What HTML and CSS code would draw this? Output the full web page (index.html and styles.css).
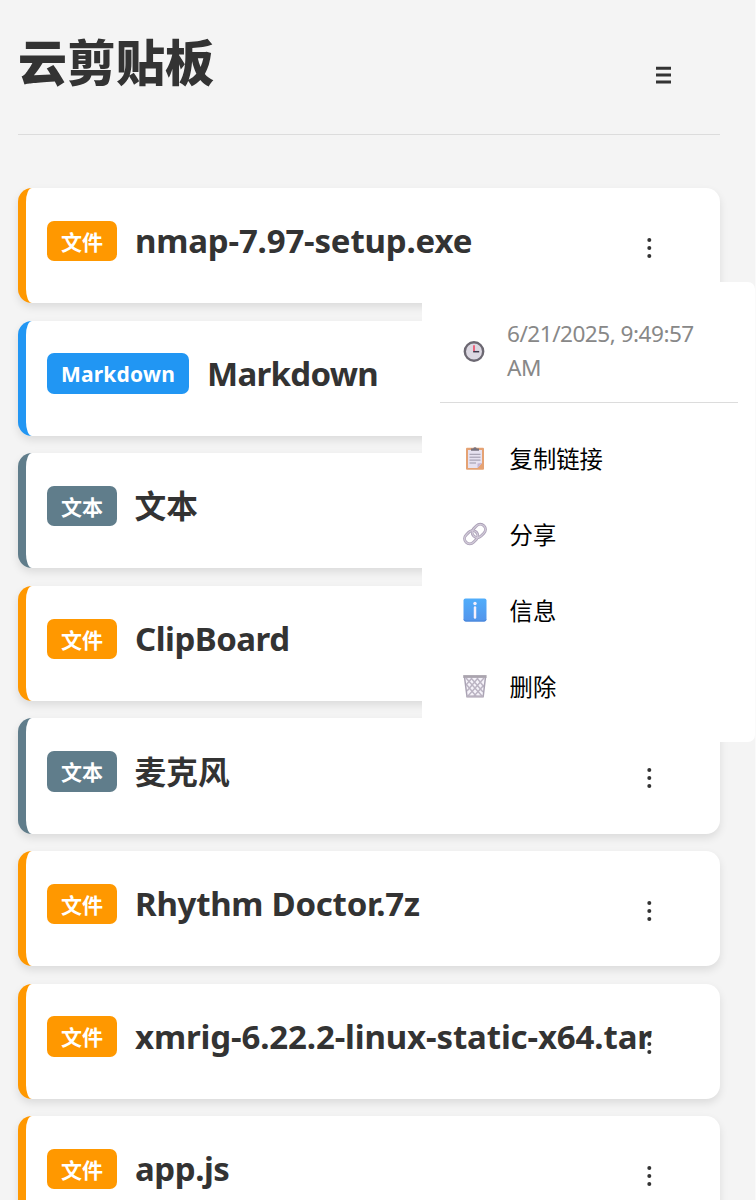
FILE: index.html
```html
<!DOCTYPE html>
<html lang="zh-CN">
<head>
<meta charset="utf-8">
<title>云剪贴板</title>
<link rel="stylesheet" href="styles.css">
</head>
<body>
<div class="page">
<header class="header">
  <h1 class="brand">云剪贴板</h1>
  <svg class="burger" width="16" height="20" viewBox="0 0 16 20"><path d="M0 3.200h15M0 10h15M0 17h15" stroke="#333" stroke-width="3"/></svg>
</header>
<main class="list">
  <article class="card file"><span class="badge">文件</span><h2 class="title t-nmap">nmap-7.97-setup.exe</h2><svg class="more" viewBox="0 0 48 24"><circle cx="24.3" cy="4" r="2"/><circle cx="24.3" cy="12" r="2"/><circle cx="24.3" cy="20" r="2"/></svg></article>
  <article class="card markdown"><span class="badge">Markdown</span><h2 class="title t-md">Markdown</h2><svg class="more" viewBox="0 0 48 24"><circle cx="24.3" cy="4" r="2"/><circle cx="24.3" cy="12" r="2"/><circle cx="24.3" cy="20" r="2"/></svg></article>
  <article class="card text"><span class="badge">文本</span><h2 class="title cjk">文本</h2><svg class="more" viewBox="0 0 48 24"><circle cx="24.3" cy="4" r="2"/><circle cx="24.3" cy="12" r="2"/><circle cx="24.3" cy="20" r="2"/></svg></article>
  <article class="card file"><span class="badge">文件</span><h2 class="title t-clip">ClipBoard</h2><svg class="more" viewBox="0 0 48 24"><circle cx="24.3" cy="4" r="2"/><circle cx="24.3" cy="12" r="2"/><circle cx="24.3" cy="20" r="2"/></svg></article>
  <article class="card text"><span class="badge">文本</span><h2 class="title cjk">麦克风</h2><svg class="more" viewBox="0 0 48 24"><circle cx="24.3" cy="4" r="2"/><circle cx="24.3" cy="12" r="2"/><circle cx="24.3" cy="20" r="2"/></svg></article>
  <article class="card file"><span class="badge">文件</span><h2 class="title t-doc">Rhythm Doctor.7z</h2><svg class="more" viewBox="0 0 48 24"><circle cx="24.3" cy="4" r="2"/><circle cx="24.3" cy="12" r="2"/><circle cx="24.3" cy="20" r="2"/></svg></article>
  <article class="card file"><span class="badge">文件</span><h2 class="title t-xmrig">xmrig-6.22.2-linux-static-x64.tar</h2><svg class="more" viewBox="0 0 48 24"><circle cx="24.3" cy="4" r="2"/><circle cx="24.3" cy="12" r="2"/><circle cx="24.3" cy="20" r="2"/></svg></article>
  <article class="card file"><span class="badge">文件</span><h2 class="title t-app">app.js</h2><svg class="more" viewBox="0 0 48 24"><circle cx="24.3" cy="4" r="2"/><circle cx="24.3" cy="12" r="2"/><circle cx="24.3" cy="20" r="2"/></svg></article>
</main>
<div class="menu">
  <div class="time">
    <svg class="icon" viewBox="0 0 24 24"><circle cx="12" cy="11.500" r="9.200" fill="#dcd8e2" stroke="#6c6872" stroke-width="2.400"/><path d="M12 5.300v6.400" stroke="#f0506c" stroke-width="1.700"/><path d="M11.200 11.700h6" stroke="#40384c" stroke-width="1.500"/></svg>
    <span class="stamp">6/21/2025, 9:49:57<br>AM</span>
  </div>
  <div class="item">
    <svg class="icon" viewBox="0 0 24 24"><rect x="3" y="1.8" width="18" height="22" rx="1" fill="#e5a273"/><path d="M5 4h14v13l-4.500 5H5z" fill="#e6e1f0"/><path d="M19 17l-4.500 5v-4.500z" fill="#c5b6d4"/><path d="M8 4.800V2.600h2.200a1.900 1.900 0 0 1 3.600 0H16v2.200z" fill="#77727e"/><path d="M6.500 8.300h11M6.500 11.200h11M6.500 14.100h11M6.500 17h6.500" stroke="#9b96a8" stroke-width="1"/></svg>
    <span>复制链接</span>
  </div>
  <div class="item">
    <svg class="icon" viewBox="0 0 24 24"><g fill="none" stroke="#a99fb5" stroke-width="2.900"><rect x="8.600" y="3.700" width="14.400" height="10.400" rx="5.200" transform="rotate(-45 15.800 8.900)"/><rect x="1" y="10" width="14.400" height="10.400" rx="5.200" transform="rotate(-45 8.200 15.200)"/></g><g fill="none" stroke="#d2cad9" stroke-width="1.300"><rect x="8.600" y="3.700" width="14.400" height="10.400" rx="5.200" transform="rotate(-45 15.800 8.900)"/><rect x="1" y="10" width="14.400" height="10.400" rx="5.200" transform="rotate(-45 8.200 15.200)"/></g></svg>
    <span>分享</span>
  </div>
  <div class="item">
    <svg class="icon" viewBox="0 0 24 24"><defs><linearGradient id="blue" x2="0" y2="1"><stop stop-color="#50adfb"/><stop offset="1" stop-color="#5294eb"/></linearGradient></defs><rect x=".5" y=".5" width="23" height="23" rx="2" fill="url(#blue)"/><path d="M1 21.500q.5 1.500 2 1.500h18q1.500 0 2-1.500" fill="none" stroke="#4984d6"/><circle cx="12" cy="5.500" r="1.700" fill="#f4effc"/><path d="M12 9.500v10" fill="none" stroke="#f4effc" stroke-width="2.500" stroke-linecap="round"/></svg>
    <span>信息</span>
  </div>
  <div class="item">
    <svg class="icon" viewBox="0 0 24 24"><path d="M1.500 2.500h20.800L20 22.500H4z" fill="#f6f3fa"/><path d="M3 4l16 18M8 4l12 14M14 4l7 9M3 10l10 12M21 4L5 22M15 4L4 17M9 4L3 11M21 11L11 22" stroke="#bbb4c3" stroke-width="1.500"/><path d="M1.500 3L4 22.500h16.200L22.500 3" fill="none" stroke="#aaa3b4" stroke-width="1.500"/><path d="M.2 2.500h23.400" stroke="#aaa4ae" stroke-width="2.800"/><path d="M3.500 22.500h17" stroke="#b9b1bf" stroke-width="2"/></svg>
    <span>删除</span>
  </div>
</div>
</div>
</body>
</html>
```
FILE: styles.css
```css
* { box-sizing: border-box; }
html, body { height: 1200px; overflow: hidden; }
body {
  margin: 0;
  background: #f4f4f4;
  color: #333;
  font-family: "Noto Sans", "Noto Sans CJK SC", sans-serif;
}
.page {
  position: relative;
  height: 1200px;
  overflow: hidden;
  padding: 0 35px 0 18px;
  border-right: 1px solid #fafafa;
}
.header {
  display: flex;
  justify-content: space-between;
  height: 135px;
  padding: 23px 48px 0 0;
  border-bottom: 1px solid #dcdcdc;
}
.brand {
  margin: 0;
  font: 900 49px/74px "Noto Sans CJK SC", sans-serif;
}
.burger { margin-top: 41.500px; }
.list {
  display: flex;
  flex-direction: column;
  gap: 17.420px;
  padding-top: 53px;
}
.card {
  display: flex;
  flex: none;
  align-items: flex-start;
  height: 115.200px;
  padding: 32.800px 47px 0 21px;
  background: #fff;
  border-left: 8px solid;
  border-radius: 14px;
  box-shadow: 0 4px 9px rgba(0, 0, 0, .1);
}
.badge {
  flex: none;
  height: 40.500px;
  padding: 0 14px;
  border-radius: 7px;
  color: #fff;
  font: bold 21px/42px "Noto Sans", "Noto Sans CJK SC", sans-serif;
}
.file { border-left-color: #ff9800; }
.file .badge { background: #ff9800; }
.markdown { border-left-color: #2196f3; }
.markdown .badge { width: 142px; background: #2196f3; letter-spacing: .2px; }
.text { border-left-color: #607d8b; }
.text .badge { background: #607d8b; }
.title {
  flex: 1;
  min-width: 0;
  height: 48px;
  margin: -3.600px -27px 0 18px;
  overflow: hidden;
  white-space: nowrap;
  font-size: 33px;
  font-weight: 700;
  line-height: 48px;
}
.t-nmap { letter-spacing: -.180px; }
.t-md { letter-spacing: -.700px; }
.t-clip { letter-spacing: -.500px; }
.t-doc { letter-spacing: -.270px; }
.t-xmrig { letter-spacing: -.140px; }
.t-app { letter-spacing: -.450px; }
.cjk { font-size: 31.700px; text-indent: -.5px; }
.more {
  position: relative;
  flex: none;
  width: 48px;
  height: 24px;
  margin-top: 15.200px;
  fill: #333;
}
.menu {
  position: absolute;
  top: 282px;
  left: 422px;
  width: 333px;
  height: 460px;
  padding: 18px 17px 18px 18px;
  border-radius: 7px;
  background: #fff;
  color: #000;
}
.time {
  display: flex;
  gap: 21px;
  height: 103px;
  padding: 17px 0 0 22px;
  margin-bottom: 17px;
  border-bottom: 1px solid #dcdcdc;
  color: #888;
  font: 22.600px/34px "Noto Sans", sans-serif;
  letter-spacing: -.510px;
}
.time .icon { margin-top: 22.500px; }
.stamp { white-space: nowrap; }
.item {
  display: flex;
  align-items: center;
  gap: 23px;
  height: 76px;
  padding-left: 22.600px;
  font: 23.300px/34px "Noto Sans CJK SC", sans-serif;
}
.icon {
  flex: none;
  width: 24px;
  height: 24px;
}
.item .icon { margin-top: -1px; }
```
